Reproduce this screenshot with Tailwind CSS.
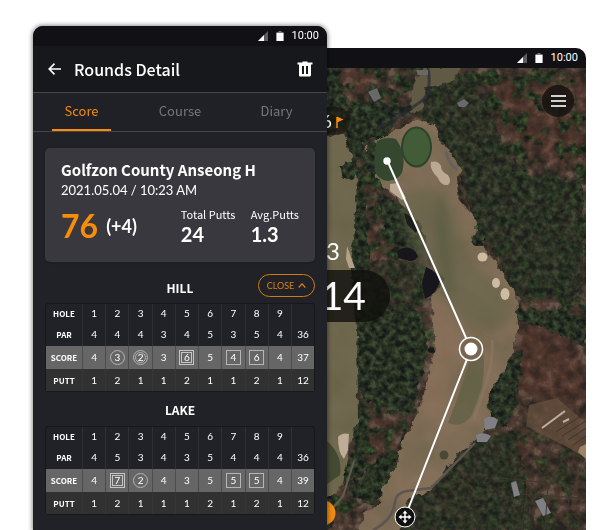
<!DOCTYPE html>
<html lang="en">
<head>
<meta charset="utf-8">
<meta name="viewport" content="width=device-width, initial-scale=1">
<title>Rounds Detail</title>
<script src="https://cdn.jsdelivr.net/npm/@tailwindcss/browser@4"></script>
</head>
<body class="bg-white font-['Noto_Sans_CJK_KR','Noto_Sans',sans-serif] text-white">
<main class="grid h-screen grid-cols-[294fr_259fr] overflow-hidden pr-[29px] pl-[33px]">

  <section class="relative z-10 mt-[26px] flex flex-col overflow-hidden rounded-t-[10px] bg-[#212227] shadow-[0_0_4px_1px_rgba(0,0,0,0.45)]">
    <div class="flex h-5 shrink-0 items-center justify-end gap-2 bg-[#111115] pr-2 font-[Roboto,sans-serif] text-[11px]">
      <svg class="h-[10px] w-[10px]" viewBox="0 0 10 10" aria-hidden="true"><path d="M10 0V10H0z" fill="#5d5d60"/><path d="M6 4V10H0z" fill="#fff"/></svg>
      <svg class="h-[10px] w-2" viewBox="0 0 8 10" aria-hidden="true"><path d="M2.500 0h3v1H7.500v9h-7V1h2z" fill="#77777a"/><path d="M.5 2h7v8h-7z" fill="#fff"/></svg>
      <span>10:00</span>
    </div>
    <header class="flex h-[47px] shrink-0 items-center border-b border-[#45464a] bg-[#17181b] pr-[14px] pl-[15px]">
      <button aria-label="Back"><svg class="h-3 w-[13px]" viewBox="0 0 13 12" fill="none" stroke="#fff" stroke-width="1.600" aria-hidden="true"><path d="M6.500.6 1.200 6l5.300 5.400M1.200 6H13"/></svg></button>
      <h1 class="ml-[13px] flex-1 text-[16px] leading-6 font-medium">Rounds Detail</h1>
      <button aria-label="Delete round"><svg class="h-4 w-4" viewBox="0 0 16 16" aria-hidden="true"><path fill="#fff" fill-rule="evenodd" d="M.5 1.500h5V.5h5v1h5v2h-1.500V14q0 1.500-1.500 1.500h-9.500Q2 15.500 2 14V3.500H.5zM5 5v8h2V5zm4 0v8h2V5z"/></svg></button>
    </header>
    <nav class="flex h-[39px] shrink-0 justify-between border-b border-[#45464a] bg-[#202126] px-[19px] text-[13px] text-[#77777a]">
      <a href="#score" class="flex w-[59px] items-center justify-center border-b-2 border-[#f98d09] text-[#f98d09]">Score</a>
      <a href="#course" class="flex w-[59px] items-center justify-center border-b-2 border-transparent">Course</a>
      <a href="#diary" class="flex w-[59px] items-center justify-center border-b-2 border-transparent pr-1">Diary</a>
    </nav>

    <div id="score" class="flex flex-col px-3 pt-4">
      <article class="flex h-[114px] flex-col rounded-[5px] bg-[#39383e] px-4 pt-3 shadow-sm">
        <h2 class="text-[15px] leading-5 font-bold whitespace-nowrap">Golfzon County Anseong H</h2>
        <p class="font-[Lato,sans-serif] text-[13px] leading-5">2021.05.04 / 10:23 AM</p>
        <div class="mt-2 flex items-start font-[Lato,sans-serif] font-bold">
          <div class="flex w-[120px] items-center gap-2">
            <span class="text-[32px] leading-9 text-[#f98d09]">76</span>
            <span class="text-[18px] leading-6">(+4)</span>
          </div>
          <dl class="w-[70px]">
            <dt class="font-['Noto_Sans_CJK_KR',sans-serif] text-[11px] leading-3 font-normal whitespace-nowrap">Total Putts</dt>
            <dd class="text-[20px] leading-7">24</dd>
          </dl>
          <dl>
            <dt class="font-['Noto_Sans_CJK_KR',sans-serif] text-[11px] leading-3 font-normal whitespace-nowrap">Avg.Putts</dt>
            <dd class="text-[20px] leading-7">1.3</dd>
          </dl>
        </div>
      </article>

      <div class="mt-3 grid h-[29px] grid-cols-[1fr_auto_1fr] items-start">
        <h3 id="hill-title" class="col-start-2 mt-1 text-[12px] leading-5 font-bold">HILL</h3>
        <button class="flex h-[23px] w-[57px] items-center justify-center gap-1 justify-self-end rounded-full border border-[#d07c10] font-[Lato,sans-serif] text-[9px] text-[#d98011]">CLOSE
          <svg class="h-[5px] w-2" viewBox="0 0 8 5" fill="none" stroke="#d98011" stroke-width="1.200" aria-hidden="true"><path d="m.7 4.500 3.300-3.700 3.300 3.700"/></svg>
        </button>
      </div>
      <table id="hill" aria-labelledby="hill-title" class="w-full table-fixed border-separate border-spacing-0 rounded-[3px] border border-[#17181b] text-center font-[Lato,sans-serif] text-[10px]"></table>
      <h3 id="lake-title" class="mt-2 mb-[6px] text-center text-[12px] leading-5 font-bold">LAKE</h3>
      <table id="lake" aria-labelledby="lake-title" class="w-full table-fixed border-separate border-spacing-0 rounded-[3px] border border-[#17181b] text-center font-[Lato,sans-serif] text-[10px]"></table>
    </div>
  </section>

  <section class="relative mt-12 -ml-10 flex flex-col overflow-hidden rounded-tr-[10px]">
    <div class="flex h-5 shrink-0 items-center justify-end gap-2 bg-[#111115] pr-2 font-[Roboto,sans-serif] text-[11px]">
      <svg class="h-[10px] w-[10px]" viewBox="0 0 10 10" aria-hidden="true"><path d="M10 0V10H0z" fill="#5d5d60"/><path d="M6 4V10H0z" fill="#fff"/></svg>
      <svg class="h-[10px] w-2" viewBox="0 0 8 10" aria-hidden="true"><path d="M2.500 0h3v1H7.500v9h-7V1h2z" fill="#77777a"/><path d="M.5 2h7v8h-7z" fill="#fff"/></svg>
      <span>10:00</span>
    </div>
    <div class="relative min-h-0 flex-1">
      <svg class="absolute inset-0 h-full w-full" viewBox="287 68 299 462" preserveAspectRatio="xMinYMin slice" role="img" aria-label="Satellite view of the hole">
        <defs>
          <filter id="woods" x="0" y="0" width="1" height="1" color-interpolation-filters="sRGB">
            <feTurbulence type="fractalNoise" baseFrequency=".09" numOctaves="5" seed="8"/>
            <feColorMatrix values="2.200 0 0 0 -.6  2.200 0 0 0 -.6  2.200 0 0 0 -.6  0 0 0 0 1"/>
            <feComponentTransfer result="n"><feFuncR type="table" tableValues=".15 .20 .25 .29 .33 .40"/><feFuncG type="table" tableValues=".14 .17 .20 .22 .26 .33"/><feFuncB type="table" tableValues=".13 .15 .17 .19 .22 .29"/></feComponentTransfer>
            <feComposite in="n" in2="SourceGraphic" operator="in"/>
          </filter>
          <filter id="clumps" x="0" y="0" width="1" height="1" color-interpolation-filters="sRGB">
            <feTurbulence type="fractalNoise" baseFrequency=".07" numOctaves="3" seed="33" result="t"/>
            <feColorMatrix values="0 0 0 0 0  0 0 0 0 0  0 0 0 0 0  6 0 0 0 -2.800" result="mask"/>
            <feTurbulence type="fractalNoise" baseFrequency=".17" numOctaves="3" seed="12"/>
            <feColorMatrix values="2 0 0 0 -.5  2 0 0 0 -.5  2 0 0 0 -.5  0 0 0 0 1"/>
            <feComponentTransfer result="n"><feFuncR type="table" tableValues=".09 .12 .15 .19 .24"/><feFuncG type="table" tableValues=".11 .15 .20 .26 .34"/><feFuncB type="table" tableValues=".09 .11 .13 .15 .19"/></feComponentTransfer>
            <feComposite in="n" in2="mask" operator="in"/>
            <feComposite in2="SourceGraphic" operator="in"/>
          </filter>
          <filter id="trees" x="-.1" y="-.1" width="1.200" height="1.200" color-interpolation-filters="sRGB">
            <feTurbulence type="fractalNoise" baseFrequency=".17" numOctaves="3" seed="21"/>
            <feColorMatrix values="2 0 0 0 -.5  2 0 0 0 -.5  2 0 0 0 -.5  0 0 0 0 1"/>
            <feComponentTransfer result="n"><feFuncR type="table" tableValues=".08 .11 .14 .17 .20 .25"/><feFuncG type="table" tableValues=".10 .13 .17 .21 .25 .30"/><feFuncB type="table" tableValues=".09 .11 .13 .14 .17 .21"/></feComponentTransfer>
            <feTurbulence type="fractalNoise" baseFrequency=".11" numOctaves="2" seed="4" result="d"/>
            <feDisplacementMap in="SourceGraphic" in2="d" scale="10" xChannelSelector="R" yChannelSelector="G"/>
            <feGaussianBlur stdDeviation=".6" result="s"/>
            <feComposite in="n" in2="s" operator="in"/>
          </filter>
          <filter id="grass" x="-.05" y="-.05" width="1.100" height="1.100" color-interpolation-filters="sRGB">
            <feTurbulence type="fractalNoise" baseFrequency=".12" numOctaves="2" seed="14" result="d"/>
            <feDisplacementMap in="SourceGraphic" in2="d" scale="8" xChannelSelector="R" yChannelSelector="G" result="s"/>
            <feTurbulence type="fractalNoise" baseFrequency=".03" numOctaves="3" seed="3"/>
            <feColorMatrix values="0 0 0 0 .39  0 0 0 0 .37  0 0 0 0 .27  1 0 0 0 -.35"/>
            <feComposite in2="s" operator="in" result="n"/>
            <feMerge><feMergeNode in="s"/><feMergeNode in="n"/></feMerge>
            <feGaussianBlur stdDeviation=".6"/>
          </filter>
          <filter id="soft"><feGaussianBlur stdDeviation=".6"/></filter>
          <filter id="softer" x="-.5" y="-.5" width="2" height="2"><feGaussianBlur stdDeviation="4"/></filter>
        </defs>
        <path d="M287 68h299v462H287z" filter="url(#woods)"/>
        <g fill="#5c3429" opacity=".35" filter="url(#softer)">
          <path d="M345 68h30l-10 20-25 12z"/><path d="M495 80h91v90l-40-10-50-30z"/><path d="M520 320l40 5 26 40v40l-75-10z"/><path d="M360 225l20 10 10 50-20 25-20-30zM370 415l20 5-10 35-15-5zM500 235l14 0-5 30-10 0z"/><path d="M440 470l30-5 10 20-40 30zM500 440h30v20l-30 10z"/>
        </g>
        <path d="M318 68h268v250h-70v50h-30l-40 90-130 72z" filter="url(#clumps)"/>
        <path d="M500 380l86 60v90H390l60-75z" filter="url(#clumps)" opacity=".7"/>

        <g filter="url(#trees)">
          <path d="M318 68h20l8 32-10 36-18-6z"/>
          <path d="M375 100l30 5 20-10 20-20 26 0 12 25 22 45 20 30 35 5 23 0v120l-20-8-30 6-26-6-10-40-24-30-16-50-12-30-12-14-20-16-40 10-20 14-16-16z" opacity=".75"/>
          <path d="M344 108l22-6 34 10-6 18-30 12-14 60-12-30 8-30z"/>
          <path d="M345 178l20 12 4 70-16 14-6-4 4-50z"/>
          <path d="M378 192l24 14 14 26-6 20-24-12z"/>
          <path d="M345 272l30-14 40 4 8 40-20 16-50 0z" opacity=".6"/>
          <path d="M357 318l30-10 37 4 3 36-6 32-12 36-18-6-30-12-8-40z"/>
          <path d="M357 408l12 4-4 60-12 12zM368 468l20-20 12 6-14 40-14 10-16-6z"/>
          <path d="M512 310h30l44 8v30l-40-20-26-6zM508 360l14-10-4 48-13 30-20-10 0-25z"/>
          <path d="M440 470l30-28 45-10 8 40 12 58H385l16-30z" opacity=".7"/>
          <path d="M318 488l16 10-4 32h-12z"/>
        </g>

        <g filter="url(#grass)">
          <path d="M318 136h25q10 20 14 44l-3 44-3 44 6 60 1 92-8 24-10 48-22 8z" fill="#70694f"/>
          <path d="M416 120q18 1 22 10l3 15 10 6 10 19-4 14 2 16 16 18 3 22 11 14 14 20 13 22 2 32-8 32-18 26-5 14 4 18-10 18-22 17-19 26-12 12-20 8-8 34-42 0 6-18 16-12 2-14 15-26 6-24 10-16 10-24 5-24 7-26-2-26-2-26 14-16-14-20-10-34-14-18-14-14-14-12-12-22-3-16 18-8 22-12z" fill="#846f59"/>
          <path d="M412 88l10-20h38l-8 14-26 6-3 18-12 8z" fill="#605a45"/>
        </g>
        <g filter="url(#softer)">
          <path d="M400 195q20-15 45 0 20 45 27 70l35 25 5 30-20 10-32-15-35-35-20-50z" fill="#63634a" opacity=".6"/>
          <path d="M438 195q10 10 10 30l8 70-10 0-12-50z" fill="#4a5338" opacity=".4"/>
          <path d="M432 300q28 10 27 50l-17 50-18 20 6-70z" fill="#92745c" opacity=".4"/>
        </g>
        <path d="M476 335q12 15 6 52l-10 28q-10 14-24 8 17-42 28-88z" fill="#5f6145" opacity=".75" filter="url(#soft)"/>
        <path d="M492 340q2 20-8 50l-10 30" stroke="#8d7860" stroke-width="3" fill="none" opacity=".6" filter="url(#soft)"/>
        <g filter="url(#trees)"><ellipse cx="371" cy="160" rx="8" ry="18"/><circle cx="350" cy="170" r="9"/><circle cx="480" cy="238" r="8"/><circle cx="431" cy="350" r="4"/><circle cx="359" cy="489" r="9"/></g>

        <g filter="url(#soft)">
          <path d="M428 68q4 22-5 32l-25 18-21 10" fill="none" stroke="#2b2b33" stroke-width="3" opacity=".7"/>
          <path d="M372 95l22 20 18-6" fill="none" stroke="#23242b" stroke-width="2" opacity=".6"/>
          <path d="M397 251q14-9 21 5-2 5-8 5l-12-3zM426 267q12 5 14 14-3 12-15 18l-3-16z" fill="#15161a"/>
          <path d="M404 213q10 3 14 16l-2 4-9-9z" fill="#1b1c1b"/>
          <path d="M368 92l9-4 4 10-7 4zM457 103l7-4 5 4-4 4-6 0zM416 70h12v5h-10z" fill="#6b6969"/>
          <path d="M390 184l8-1 8 15-4 2-12-9z" fill="#bba993"/>
          <path d="M377 141q9-5 19-2 10 14 7 29-1 11-15 13-10-1-13-10-2-18 2-30z" fill="#34472d"/>
          <ellipse cx="416.500" cy="147" rx="15.500" ry="20.500" fill="#2f4229"/>
          <ellipse cx="416.500" cy="147" rx="13.500" ry="18.500" fill="#435b37"/>
          <path d="M431 162q7-2 10 4 0 6 7 9 4 6 0 10-7 1-10-7-9-9-7-16z" fill="#bba993"/>
          <ellipse cx="482.500" cy="257" rx="5" ry="4.500" fill="#cdbba2"/><ellipse cx="496" cy="283" rx="4" ry="5" fill="#cdbba2"/><ellipse cx="505" cy="294" rx="4.500" ry="6" fill="#cdbba2"/>
          <path d="M347 246l4 11 4 11h-6l-3-9z" fill="#b3a189"/>
          <path d="M338 437q4-5 11-3l-1 16-4 9q-6-6-6-22z" fill="#bfac97"/>
          <path d="M327 441q16 14 13 34l-13 9z" fill="#434b32"/>
          <path d="M373 530q20-10 22-28 1-9 12-11l24-3 44-45" fill="none" stroke="#5b5551" stroke-width="2.500"/>
          <path d="M354 461l-11 35-15 18" fill="none" stroke="#625b50" stroke-width="2"/>
          <path d="M446 152q3 12 11 18" fill="none" stroke="#67615f" stroke-width="3"/>
          <path d="M484 419q8-5 14 1l-3 8-10 2zM476 435q8-4 15 1l-4 6-10 0zM511 483l5-2 4 14-6 2zM535 501l8-3 8 15-8 3z" fill="#7f7f85"/>
          <circle cx="444" cy="455" r="4.500" fill="#4b4934"/>
          <path d="M529 405l28-7 29 25v35l-19-11-41-21z" fill="#67503e" opacity=".75"/>
          <path d="m542 428 23-17M563 422l6-3" stroke="#bfb0a0" stroke-width="2"/>
          <g stroke="#41332b" stroke-width="1"><path d="m556 432 25-16M562 436l24-15M568 440l18-12M573 445l13-9"/></g>
          <path d="M502 478l84 9M520 494l62 4M528 481l-6 49M548 485l-3 42M570 488l-4 38" stroke="#41372f" stroke-width="1"/>
          <path d="M580 447l6-3v15l-8-7z" fill="#a18468"/>
        </g>

        <rect x="277" y="107" width="73" height="28" rx="14" fill="#17150f" fill-opacity=".62"/>
        <rect x="267" y="270" width="123" height="52" rx="26" fill="#0e0e0b" fill-opacity=".78"/>
        <path d="M337 117v11" stroke="#f98d09" stroke-width="1.500"/><path d="M337 116.500l6.500 3-6.500 3z" fill="#f98d09"/>
        <g fill="#fff" class="font-[Lato,sans-serif]" text-anchor="end">
          <text x="332" y="128" font-size="18">6</text>
          <text x="340" y="260" font-size="24">3</text>
          <text x="366" y="310" font-size="39">14</text>
        </g>
        <circle cx="323" cy="513" r="12.500" fill="#f08a10"/>
        <path d="M387.500 161 471 349 405 517" fill="none" stroke="#fff" stroke-width="2"/>
        <circle cx="387" cy="161" r="3.700" fill="#fff"/>
        <circle cx="471" cy="349" r="11.500" fill="#786650" stroke="#fff" stroke-width="1.500"/>
        <circle cx="471" cy="349" r="6.500" fill="#fff"/>
        <circle cx="405" cy="517" r="10" fill="#101010" stroke="#fff"/>
        <path d="M405 512v10M400 517h10" stroke="#fff" stroke-width="1.500"/>
        <path d="m405 510.500 2.500 3h-5zM405 523.500l2.500-3h-5zM398.500 517l3-2.500v5zM411.500 517l-3-2.500v5z" fill="#fff"/>
      </svg>
      <button aria-label="Menu" class="absolute top-[17px] right-3 flex h-8 w-8 flex-col items-center justify-center gap-[3px] rounded-full bg-[#141210]/80">
        <span class="h-[2px] w-[15px] bg-[#d0d2d1]"></span><span class="h-[2px] w-[15px] bg-[#d0d2d1]"></span><span class="h-[2px] w-[15px] bg-[#d0d2d1]"></span>
      </button>
    </div>
  </section>
</main>

<script>
// In the SCORE row: o = circle, oo = double circle, s = square, ss = double square
const cards = {
  hill: {
    PAR: ['4','4','4','3','4','5','3','5','4','36'],
    SCORE: ['4','3 o','2 oo','3','6 ss','5','4 s','6 s','4','37'],
    PUTT: ['1','2','1','1','2','1','1','2','1','12']
  },
  lake: {
    PAR: ['4','5','3','4','3','5','4','4','4','36'],
    SCORE: ['4','7 ss','2 o','4','3','5','5 s','5 s','4','39'],
    PUTT: ['1','2','1','1','1','2','1','2','1','12']
  }
};
const marks = {
  o: 'mx-auto flex h-[15px] w-[15px] items-center justify-center rounded-full border border-[#b5b5b5]',
  oo: 'mx-auto flex h-[15px] w-[15px] items-center justify-center rounded-full border-3 border-double border-[#b5b5b5]',
  s: 'mx-auto flex h-[15px] w-[15px] items-center justify-center border border-[#b5b5b5]',
  ss: 'mx-auto flex h-[15px] w-[15px] items-center justify-center border-3 border-double border-[#c5c5c5]'
};
const rowStyle = { PAR: 'h-[23px]', SCORE: 'h-[23px] bg-[#666666]', PUTT: 'h-[22px] bg-[#313131]' };
const cell = 'border-l border-[#3a3a3d]/60 p-0 leading-[15px]';
const label = "p-0 font-['Noto_Sans_CJK_KR',sans-serif] text-[8px] leading-[15px] font-bold";
for (const [id, rows] of Object.entries(cards)) {
  const holes = [1,2,3,4,5,6,7,8,9].map(n => `<th scope="col" class="${cell} font-normal">${n}</th>`).join('');
  let html = `<colgroup><col class="w-[36px]"><col span="9"><col class="w-[23px]"></colgroup>
    <thead><tr class="h-[19px]"><th scope="row" class="${label}">HOLE</th>${holes}<td class="${cell}"></td></tr></thead><tbody>`;
  for (const [name, values] of Object.entries(rows)) {
    html += `<tr class="${rowStyle[name]}"><th scope="row" class="${label}">${name}</th>` + values.map(v => {
      const [n, m] = v.split(' ');
      return `<td class="${cell}">${m ? `<span class="${marks[m]}">${n}</span>` : n}</td>`;
    }).join('') + '</tr>';
  }
  document.getElementById(id).innerHTML = html + '</tbody>';
}
</script>
</body>
</html>
